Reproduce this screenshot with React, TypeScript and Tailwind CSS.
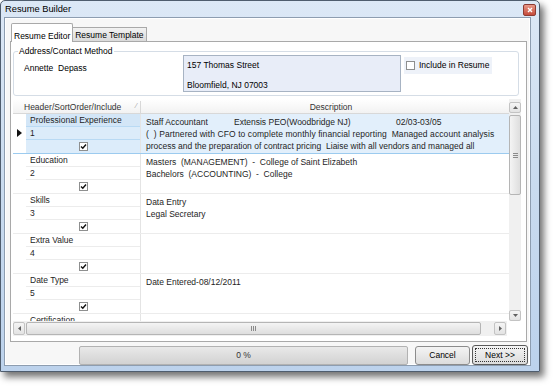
import React from "react";

const font = { fontFamily: '"Liberation Sans", Arial, sans-serif' };

function Check({ checked = true }: { checked?: boolean }) {
  return (
    <div className="w-[9px] h-[9px] border border-[#8e8f8f] bg-white flex items-center justify-center">
      {checked && (
        <svg width="7" height="7" viewBox="0 0 7 7">
          <path d="M1 3.5 L2.8 5.3 L6 1.5" stroke="#111" strokeWidth="1.4" fill="none" />
        </svg>
      )}
    </div>
  );
}

type Row = { header: string; order: string; desc: React.ReactNode; selected?: boolean };

const rows: Row[] = [
  {
    header: "Professional Experience",
    order: "1",
    selected: true,
    desc: (
      <>
        <div className="flex h-[12px] items-center">
          <span className="w-[88px]">Staff Accountant</span>
          <span className="w-[162px]">Extensis PEO(Woodbridge NJ)</span>
          <span>02/03-03/05</span>
        </div>
        <div className="h-[12px] flex items-center whitespace-nowrap tracking-[0.08px]">( &nbsp;)&nbsp;Partnered with CFO to complete monthly financial reporting &nbsp;Managed account analysis</div>
        <div className="h-[12px] flex items-center whitespace-nowrap">process and the preparation of contract pricing &nbsp;Liaise with all vendors and managed all</div>
      </>
    ),
  },
  {
    header: "Education",
    order: "2",
    desc: (
      <>
        <div className="h-[12px] flex items-center whitespace-nowrap">Masters &nbsp;(MANAGEMENT) &nbsp;- &nbsp;College of Saint Elizabeth</div>
        <div className="h-[12px] flex items-center whitespace-nowrap">Bachelors &nbsp;(ACCOUNTING) &nbsp;- &nbsp;College</div>
      </>
    ),
  },
  {
    header: "Skills",
    order: "3",
    desc: (
      <>
        <div className="h-[12px] flex items-center">Data Entry</div>
        <div className="h-[12px] flex items-center">Legal Secretary</div>
      </>
    ),
  },
  { header: "Extra Value", order: "4", desc: null },
  {
    header: "Date Type",
    order: "5",
    desc: <div className="h-[12px] flex items-center">Date Entered-08/12/2011</div>,
  },
  { header: "Certification", order: "6", desc: null },
];

function GridRow({ r }: { r: Row }) {
  const sel = r.selected;
  return (
    <div className={`flex h-[40px] shrink-0 border-b ${sel ? "border-[#9ccbef]" : "border-[#ececec]"}`}>
      <div className="w-[13px] flex items-start justify-center pt-[15px]">
        {sel && (
          <svg width="5" height="8" viewBox="0 0 5 8">
            <path d="M0 0 L5 4 L0 8 Z" fill="#111" />
          </svg>
        )}
      </div>
      <div className={`w-[115px] flex flex-col border-r border-[#e4e4e4] ${sel ? "bg-[#dcecfa]" : "bg-white"}`}>
        <div className={`h-[13px] pl-[4px] flex items-center border-b ${sel ? "border-[#b9daf4] bg-[#d3e6f7]" : "border-[#ececec]"}`}>{r.header}</div>
        <div className={`h-[13px] pl-[4px] flex items-center border-b ${sel ? "border-[#b9daf4]" : "border-[#ececec]"}`}>{r.order}</div>
        <div className="flex-1 flex items-center justify-center">
          <Check />
        </div>
      </div>
      <div className={`flex-1 pl-[5px] pt-[2px] overflow-hidden ${sel ? "bg-[#e2effb]" : "bg-white"}`}>{r.desc}</div>
    </div>
  );
}

function ScrollBtn({ dir }: { dir: "up" | "down" | "left" | "right" }) {
  const paths: Record<string, string> = {
    up: "M1 4 L3.5 1 L6 4 Z",
    down: "M1 1 L3.5 4 L6 1 Z",
    left: "M4 1 L1 3.5 L4 6 Z",
    right: "M1 1 L4 3.5 L1 6 Z",
  };
  const vert = dir === "up" || dir === "down";
  return (
    <div className={`${vert ? "w-[12px] h-[11px]" : "w-[12px] h-[13px]"} border border-[#c3c3c3] rounded-[2px] bg-gradient-to-b from-[#f5f5f5] to-[#e3e3e3] flex items-center justify-center`}>
      <svg width={vert ? 7 : 5} height={vert ? 5 : 7} viewBox={vert ? "0 0 7 5" : "0 0 5 7"}>
        <path d={paths[dir]} fill="#606060" />
      </svg>
    </div>
  );
}

export default function App() {
  return (
    <div className="w-[555px] h-[390px] bg-white overflow-hidden text-[8.5px] text-[#1e1e1e]" style={font}>
      <div className="w-[540px] h-[372px] flex flex-col border border-[#4f5d6e] rounded-t-[5px] bg-gradient-to-b from-[#dce8f6] via-[#c9dbef] to-[#bcd2ec] shadow-[4px_5px_7px_rgba(0,0,0,0.55)]">
        {/* Title bar */}
        <div className="h-[19px] flex items-center justify-between pl-[4px] pr-[3px]">
          <span className="text-[9.3px] text-black mt-[1px]">Resume Builder</span>
          <div className="w-[13px] h-[12px] mt-[1px] rounded-[2px] border border-[#8d3b33] bg-gradient-to-b from-[#e8998a] to-[#c4493a] flex items-center justify-center">
            <svg width="6" height="6" viewBox="0 0 6 6">
              <path d="M1 1 L5 5 M5 1 L1 5" stroke="white" strokeWidth="1.4" />
            </svg>
          </div>
        </div>
        {/* Body */}
        <div className="flex-1 flex pl-[3px] pr-[8px] pb-[5px]">
          <div className="flex-1 flex flex-col border border-[#8d9db0] bg-[#f7f7f7] shadow-[inset_0_0_0_1px_#ffffff]">
            {/* Tabs */}
            <div className="h-[23px] flex items-end pl-[6px] pt-[3px]">
              <div className="h-[19px] px-[2px] pt-[6px] bg-white border border-b-0 border-[#a9a9a9] rounded-t-[2px] flex items-center relative top-[1px] z-10 text-black">
                Resume Editor
              </div>
              <div className="h-[14px] px-[2px] pt-[1px] bg-gradient-to-b from-[#f2f2f2] to-[#dadada] border border-b-0 border-l-0 border-[#a9a9a9] flex items-center text-black">
                Resume Template
              </div>
            </div>
            {/* Panel */}
            <div className="ml-[5px] w-[517px] h-[301px] border border-[#a9a9a9] bg-white flex flex-col">
              {/* Group box */}
              <div className="ml-[2px] mt-[9px] w-[506px] h-[45px] border border-[#d5dde6] rounded-[3px] relative shrink-0">
                <span className="absolute -top-[7px] left-[4px] bg-white px-[1px] text-black">Address/Contact Method</span>
                <div className="flex h-full">
                  <div className="w-[169px] pl-[10px] pt-[10px] text-black">Annette &nbsp;Depass</div>
                  <div className="mt-[3px] w-[218px] h-[37px] border border-[#a7b3c3] bg-[#e8edf8] flex flex-col justify-between pl-[3px] pt-[5px] pb-[2px] leading-none text-black">
                    <div>157 Thomas Street</div>
                    <div>Bloomfield, NJ 07003</div>
                  </div>
                  <div className="ml-[3px] mt-[5px] w-[88px] h-[17px] bg-[#eef2f9] flex items-center pl-[2px] gap-[4px] text-black">
                    <div className="w-[9px] h-[9px] border border-[#8e8f8f] bg-white" />
                    <span>Include in Resume</span>
                  </div>
                </div>
              </div>
              {/* Grid */}
              <div className="ml-[2px] mt-[3px] w-[508px] h-[237px] flex flex-col shrink-0">
                <div className="flex h-[222px]">
                  <div className="flex-1 flex flex-col overflow-hidden">
                    <div className="h-[15px] shrink-0 flex border-b border-[#d8d8d8] bg-gradient-to-b from-white to-[#f2f2f2] pt-[2px]">
                      <div className="w-[128px] border-r border-[#d8d8d8] flex items-center pl-[11px] relative text-[#333]">
                        Header/SortOrder/Include
                        <span className="absolute right-[3px] top-[0px] text-[7px] text-[#999]">⁄</span>
                      </div>
                      <div className="flex-1 flex items-center justify-center pl-[12px] text-[#333]">Description</div>
                    </div>
                    {rows.map((r, i) => (
                      <GridRow key={i} r={r} />
                    ))}
                  </div>
                  <div className="w-[12px] pt-[3px] flex flex-col bg-[#f0f0f0]">
                    <ScrollBtn dir="up" />
                    <div className="mt-[2px] h-[80px] border border-[#b5b5b5] rounded-[2px] bg-gradient-to-r from-[#f4f4f4] to-[#dedede] flex items-center justify-center">
                      <div className="flex flex-col gap-[1px]">
                        <div className="w-[5px] h-px bg-[#8a8a8a]" />
                        <div className="w-[5px] h-px bg-[#8a8a8a]" />
                        <div className="w-[5px] h-px bg-[#8a8a8a]" />
                      </div>
                    </div>
                    <div className="flex-1" />
                    <ScrollBtn dir="down" />
                  </div>
                </div>
                <div className="h-[15px] flex">
                  <div className="w-[494px] flex items-center bg-[#f0f0f0] pr-[1px]">
                    <ScrollBtn dir="left" />
                    <div className="ml-[1px] w-[455px] h-[13px] border border-[#b5b5b5] rounded-[2px] bg-gradient-to-b from-[#f4f4f4] to-[#dedede] flex items-center justify-center">
                      <div className="flex gap-[1px]">
                        <div className="w-px h-[5px] bg-[#8a8a8a]" />
                        <div className="w-px h-[5px] bg-[#8a8a8a]" />
                        <div className="w-px h-[5px] bg-[#8a8a8a]" />
                      </div>
                    </div>
                    <div className="flex-1" />
                    <ScrollBtn dir="right" />
                  </div>
                  <div className="flex-1 bg-white" />
                </div>
              </div>
            </div>
            {/* Bottom buttons */}
            <div className="flex items-center pt-[3px] pl-[74px]">
              <div className="w-[329px] h-[19px] border border-[#b2b2b2] rounded-[2px] bg-gradient-to-b from-[#e9e9e9] to-[#d2d2d2] flex items-center justify-center text-[#333]">
                0 %
              </div>
              <div className="ml-[7px] w-[55px] h-[19px] border border-[#8c8c8c] rounded-[3px] bg-gradient-to-b from-[#f4f4f4] to-[#dcdcdc] flex items-center justify-center text-black">
                Cancel
              </div>
              <div className="ml-[2px] w-[56px] h-[20px] border border-[#5a5a5a] rounded-[3px] bg-gradient-to-b from-[#f4f4f4] to-[#dcdcdc] flex items-center justify-center p-[2px]">
                <div className="w-full h-full border border-dotted border-[#333] flex items-center justify-center text-black">
                  Next &gt;&gt;
                </div>
              </div>
            </div>
          </div>
        </div>
      </div>
    </div>
  );
}
